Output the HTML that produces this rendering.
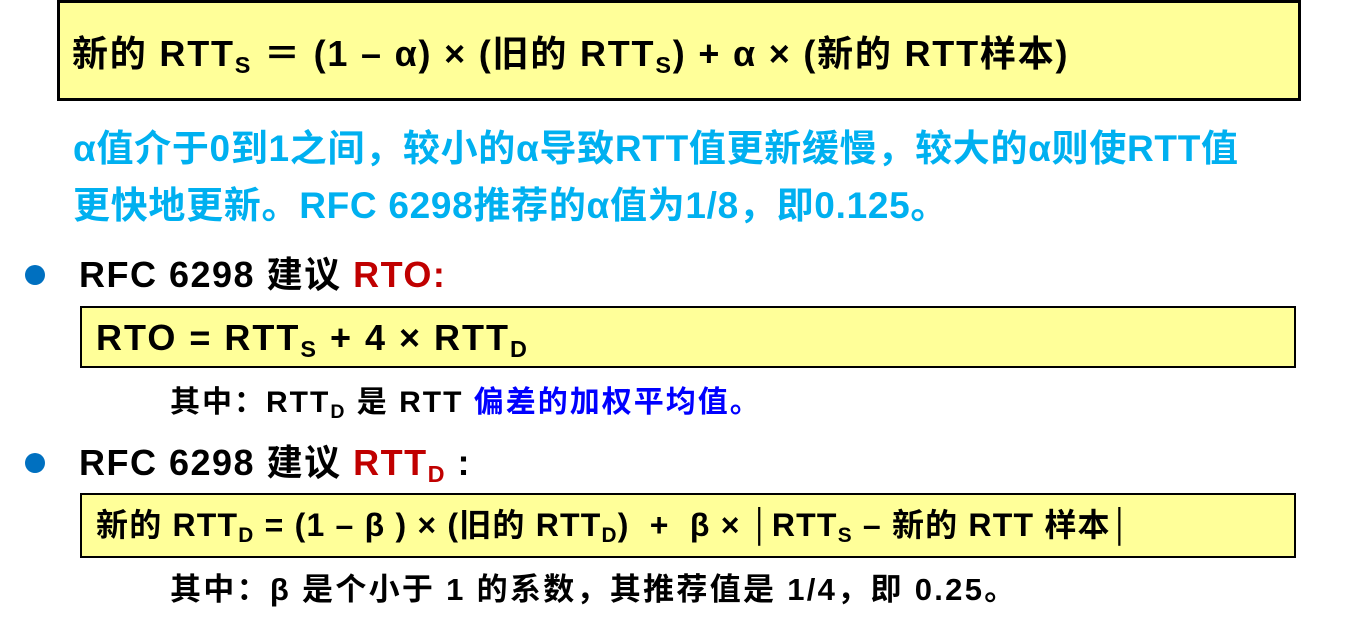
<!DOCTYPE html>
<html><head><meta charset="utf-8"><style>
body{margin:0;width:1349px;height:630px;background:#fff;position:relative;overflow:hidden;font-family:"Liberation Sans","Noto Sans CJK SC",sans-serif;font-weight:bold;}
.a{position:absolute;white-space:nowrap;line-height:1;}
.box{position:absolute;background:#FFFF99;border:2px solid #000;box-sizing:border-box;}
sub{font-size:0.65em;vertical-align:-0.3em;line-height:0}
.dot{position:absolute;width:20px;height:20px;border-radius:50%;background:#0070C0}
.c{color:#00B0F0}.r{color:#C00000}.b{color:#0000FF}
</style></head><body>
<div class="box" style="left:57px;top:0;width:1244px;height:101px;border-width:3px"></div>
<div class="a" style="left:72px;top:36px;font-size:36px;letter-spacing:1.8px">新的 RTT<sub>S</sub> ＝ (1 – α) × (旧的 RTT<sub>S</sub>) + α × (新的 RTT样本)</div>
<div class="a c" style="left:73px;top:130px;font-size:37px;letter-spacing:0.7px">α值介于0到1之间，较小的α导致RTT值更新缓慢，较大的α则使RTT值</div>
<div class="a c" style="left:73px;top:187px;font-size:37px;letter-spacing:0.7px">更快地更新。RFC 6298推荐的α值为1/8，即0.125。</div>
<div class="dot" style="left:25px;top:265px"></div>
<div class="a" style="left:79px;top:257px;font-size:36px;letter-spacing:1.5px">RFC 6298 建议 <span class="r">RTO:</span></div>
<div class="box" style="left:80px;top:306px;width:1216px;height:62px"></div>
<div class="a" style="left:96px;top:320px;font-size:36px;letter-spacing:2px">RTO = RTT<sub>S</sub> + 4 × RTT<sub>D</sub></div>
<div class="a" style="left:170px;top:388px;font-size:30px;letter-spacing:2px">其中：RTT<sub>D</sub> 是 RTT <span class="b">偏差的加权平均值。</span></div>
<div class="dot" style="left:25px;top:453px"></div>
<div class="a" style="left:79px;top:445px;font-size:36px;letter-spacing:1.5px">RFC 6298 建议 <span class="r">RTT<sub>D</sub></span> :</div>
<div class="box" style="left:80px;top:493px;width:1216px;height:65px"></div>
<div class="a" style="left:96px;top:509px;font-size:32px;letter-spacing:1.2px">新的 RTT<sub>D</sub> = (1 – β ) × (旧的 RTT<sub>D</sub>) &nbsp;+ &nbsp;β × │RTT<sub>S</sub> – 新的 RTT 样本│</div>
<div class="a" style="left:170px;top:574px;font-size:31px;letter-spacing:2.3px">其中：β 是个小于 1 的系数，其推荐值是 1/4，即 0.25。</div>
</body></html>
